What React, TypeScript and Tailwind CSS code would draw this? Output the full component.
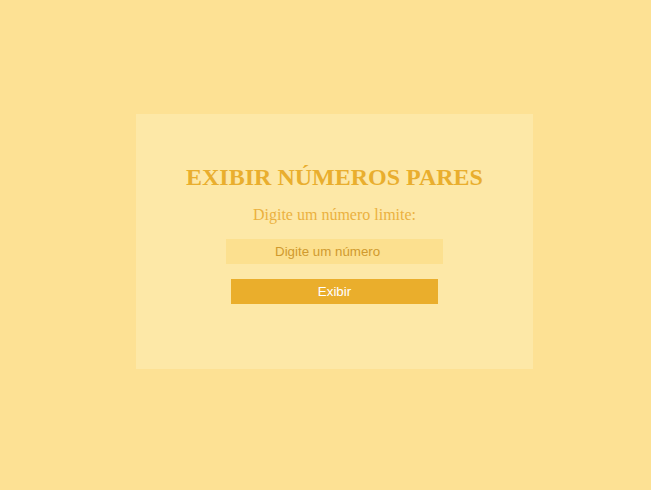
const App = () => {
  return (
    <div className="min-h-[490px] bg-[#fde194] pl-[136px] pt-[114px]">
      <div className="flex h-[255px] w-[397px] flex-col items-center bg-[#fde8a7] pt-[50px] font-['Liberation_Serif',serif]">
        <h1 className="text-[24px] font-bold leading-[26px] text-[#e9ae2e]">EXIBIR NÚMEROS PARES</h1>
        <p className="mt-[16px] text-[16px] leading-[18px] text-[#ebb13f]">Digite um número limite:</p>
        <input
          type="text"
          placeholder="Digite um número"
          className="mt-[15px] h-[25px] w-[217px] bg-[#fce08f] pl-[49px] font-['Liberation_Sans',sans-serif] text-[13.3333px] text-[#c98f1f] outline-none placeholder:text-[#d09a2e]"
        />
        <button className="mt-[15px] h-[25px] w-[207px] bg-[#eaae2c] font-['Liberation_Sans',sans-serif] text-[13.3333px] text-white">
          Exibir
        </button>
      </div>
    </div>
  )
}

export default App
